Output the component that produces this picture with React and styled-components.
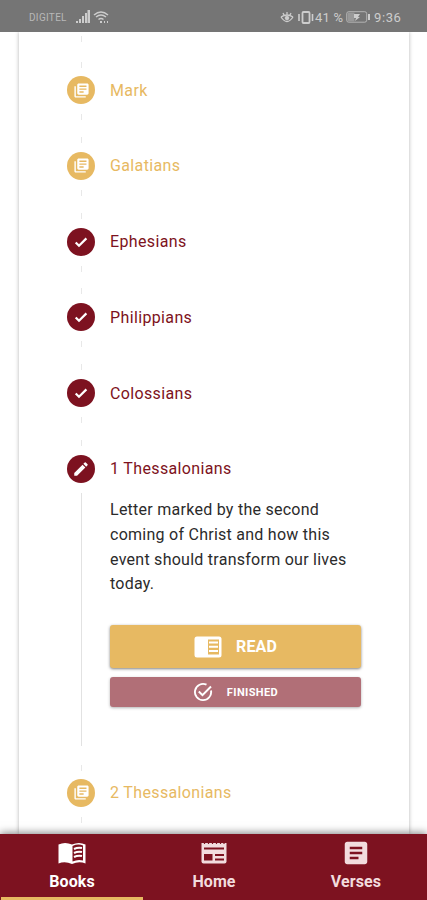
import React from "react"
import styled, { createGlobalStyle } from "styled-components"
import { MdArticle, MdEdit, MdLibraryBooks } from "react-icons/md"

const maroon = "#7d1220"
const gold = "#e7b962"

const GlobalStyle = createGlobalStyle`
    * {
        box-sizing: border-box;
    }

    body {
        margin: 0;
        background: #fff;
        font-family: Roboto, sans-serif;
    }
`

const Screen = styled.div`
    height: 900px;
    display: flex;
    flex-direction: column;
    overflow: hidden;
`

const StatusBar = styled.header`
    height: 32px;
    flex: none;
    padding: 2px 25px 0 29px;
    display: flex;
    align-items: center;
    background: #757575;
    color: #cdcdcd;
`

const Carrier = styled.span`
    width: 47px;
    font-size: 10px;
    letter-spacing: 0.3px;
    color: #b8b8b8;
`

const StatusIcon = styled.svg`
    flex: none;
    margin-right: ${props => props.$gap || 0}px;
    display: block;
`

const Spacer = styled.div`
    flex: 1;
`

const StatusText = styled.span`
    width: ${props => props.$width}px;
    font-size: 13px;
    letter-spacing: ${props => props.$spacing || 0.2}px;
    white-space: nowrap;
`

const Content = styled.main`
    flex: 1;
    min-height: 0;
    overflow: hidden;
    padding: 0 18px 0 19px;
`

const Card = styled.section`
    height: 100%;
    padding: 0 48px;
    box-shadow: 0 0 4px rgba(0, 0, 0, 0.3);
`

const Step = styled.div`
    height: 28px;
    display: flex;
    align-items: center;
    gap: 15px;
`

const Bullet = styled.div`
    width: 28px;
    height: 28px;
    border-radius: 50%;
    display: flex;
    align-items: center;
    justify-content: center;
    background: ${props => props.$color};
    color: #fff;
`

const StepLabel = styled.span`
    font-size: 16px;
    letter-spacing: 0.36px;
    color: ${props => props.$color};
`

const Connector = styled.div`
    height: ${props => props.$height || 47.8}px;
    margin-left: 14px;
    padding: ${props => props.$pad || "10px 0 9px"};
    display: flex;
    flex-direction: column;
    justify-content: space-between;

    &::before,
    &::after {
        content: "";
        width: 1px;
        height: 6px;
        background: #e8e8e8;
    }

    &::before {
        visibility: ${props => (props.$single ? "hidden" : "visible")};
    }
`

const StepContent = styled.div`
    height: 253px;
    margin: 10px 0 0 14px;
    padding: 5px 0 0 28px;
    border-left: 1px solid #e2e2e2;
`

const Description = styled.p`
    margin: 0 0 28px;
    font-size: 16px;
    line-height: 24.8px;
    letter-spacing: 0.26px;
    color: #2b2b2b;
    white-space: nowrap;
`

const Button = styled.button`
    width: 251px;
    height: ${props => (props.$small ? 30 : 43)}px;
    margin: 0 0 9px;
    padding: 0;
    border: 0;
    border-radius: 3px;
    display: flex;
    align-items: center;
    justify-content: center;
    gap: 14px;
    background: ${props => (props.$small ? "#b16f77" : gold)};
    box-shadow: 0 1px 3px rgba(0, 0, 0, ${props => (props.$small ? 0.3 : 0.5)});
    color: #fff;
    font-family: inherit;
    font-size: ${props => (props.$small ? 11 : 16)}px;
    font-weight: 700;
    letter-spacing: ${props => (props.$small ? 0.4 : 0.1)}px;
`

const TabBar = styled.nav`
    position: relative;
    height: 66px;
    flex: none;
    padding-left: 1px;
    display: flex;
    background: ${maroon};
    box-shadow: 0 -1px 8px rgba(0, 0, 0, 0.5);
`

const Tab = styled.a`
    flex: 1;
    padding-top: 4px;
    display: flex;
    flex-direction: column;
    align-items: center;
    border-bottom: 3px solid ${props => (props.$active ? gold : "transparent")};
    color: ${props => (props.$active ? "#fff" : "#f2dcde")};

    svg {
        display: block;
    }
`

const TabLabel = styled.span`
    margin-top: 4px;
    font-size: 16px;
    line-height: 19px;
    font-weight: 700;
    letter-spacing: 0.1px;
`

const CheckIcon = () => (
    <svg width="16" height="16" viewBox="0 0 16 16" fill="none" stroke="currentColor">
        <path d="M2.700 8.500l3.300 3.300 7.400-7.400" strokeWidth="2.200" />
    </svg>
)

const FinishedIcon = () => (
    <svg width="20" height="20" viewBox="0 0 20 20" fill="none" stroke="currentColor">
        <path d="M18 8.500A8.100 8.100 0 1 1 13.500 2.700" strokeWidth="1.900" />
        <path d="M5.800 9.500l3.700 3.700L18 4.500" strokeWidth="2" />
    </svg>
)

const ReaderIcon = () => (
    <svg width="28" height="22" viewBox="0 0 28 22">
        <rect x="0.5" y="0.5" width="27" height="21" rx="2.5" fill="#fff" />
        <path d="M14 3.500h11v15H14z" fill={gold} />
        <path d="M15 6.500h9M15 10.800h9M15 15h9" stroke="#fff" strokeWidth="2" />
    </svg>
)

const BooksIcon = () => (
    <svg width="30" height="30" viewBox="0 0 30 30">
        <path
            d="M1.500 6.500Q8 3.500 15 6.500Q22 3.500 28.500 6.500V25.500Q22 23 15 26Q8 23 1.500 25.500z"
            fill="currentColor"
        />
        <path d="M15.500 8Q21 5.500 26 7.500V22.500Q21 21 15.500 23.500z" fill={maroon} />
        <path
            d="M17 11q4-2 8-1M17 15q4-2 8-1M17 19q4-2 8-1"
            fill="none"
            stroke="currentColor"
            strokeWidth="2"
        />
    </svg>
)

const HomeIcon = () => (
    <svg width="30" height="30" viewBox="0 0 30 30">
        <path
            d="M2.500 5H27.500V23.500q0 2-2 2H4.500q-2 0-2-2z"
            fill="currentColor"
        />
        <path
            d="M5.500 4.500v1.500M9.500 4.500v1.500M13.500 4.500v1.500M17.500 4.500v1.500M21.500 4.500v1.500M25 4.500v1.500"
            stroke={maroon}
            strokeWidth="1.200"
        />
        <path
            d="M5 9.500h20v2H5zM5 16h8.500v6.500H5zM16 16h9v2h-9zM16 20.500h9v2h-9z"
            fill={maroon}
        />
    </svg>
)

const icons = {
    pending: <MdLibraryBooks size={17} />,
    done: <CheckIcon />,
    current: <MdEdit size={18} />,
}

const books = [
    { name: "Mark", status: "pending" },
    { name: "Galatians", status: "pending" },
    { name: "Ephesians", status: "done" },
    { name: "Philippians", status: "done" },
    { name: "Colossians", status: "done" },
    { name: "1 Thessalonians", status: "current" },
]

const BookStep = ({ book }) => {
    const color = book.status === "pending" ? gold : maroon
    return (
        <Step>
            <Bullet $color={color}>{icons[book.status]}</Bullet>
            <StepLabel $color={color}>{book.name}</StepLabel>
        </Step>
    )
}

const App = () => (
    <Screen>
        <GlobalStyle />
        <StatusBar>
            <Carrier>DIGITEL</Carrier>
            <StatusIcon width="15" height="14" viewBox="0 0 15 14" $gap={2} fill="currentColor">
                <path d="M0 11h2v2H0zM3 9h2v4H3zM6 6h2v7H6zM9 3h2v10H9zM11.500 0h2.500v13h-2.500z" />
            </StatusIcon>
            <StatusIcon width="16" height="13" viewBox="0 0 16 13" fill="none" stroke="currentColor">
                <path d="M1 4q7-6 14 0M3 6q5-4 10 0M5.500 8.500q2.500-2 5 0" strokeWidth="1.500" />
                <path d="M7 11h2M11 11h1M14 11h1" strokeWidth="2" />
            </StatusIcon>
            <Spacer />
            <StatusIcon width="14" height="13" viewBox="0 0 14 13" $gap={4} fill="none" stroke="currentColor">
                <path d="M1 6q6 9 12 0M1 6q6-4 12 0M7 1v3M3 2l1 2M11 2l-1 2" strokeWidth="1.300" />
                <circle cx="7" cy="7" r="1.800" fill="currentColor" />
            </StatusIcon>
            <StatusIcon width="16" height="13" viewBox="0 0 16 13" $gap={1} fill="none" stroke="currentColor">
                <rect x="4.500" y="1" width="7" height="11" rx="1" strokeWidth="1.800" />
                <path d="M1 3v7M14.500 3v7" strokeWidth="1.600" />
            </StatusIcon>
            <StatusText $width={31}>41 %</StatusText>
            <StatusIcon width="25" height="12" viewBox="0 0 25 12" $gap={3} fill="none" stroke="currentColor">
                <rect x="0.700" y="0.700" width="20" height="10.500" rx="2" opacity="0.7" />
                <path d="M1.500 1.500h7v9h-7z" fill="#999" stroke="none" />
                <path d="M23 3v6" strokeWidth="2" />
                <path d="M8 3h6l-2 3h2l-5 4 1-3H8z" fill="currentColor" stroke="none" />
            </StatusIcon>
            <StatusText $width={28} $spacing={0.6}>9:36</StatusText>
        </StatusBar>
        <Content>
            <Card>
                <Connector $height={44} $pad="4px 0 8px" />
                {books.map((book, index) => (
                    <React.Fragment key={book.name}>
                        {index > 0 && <Connector />}
                        <BookStep book={book} />
                    </React.Fragment>
                ))}
                <StepContent>
                    <Description>
                        Letter marked by the second
                        <br />
                        coming of Christ and how this
                        <br />
                        event should transform our lives
                        <br />
                        today.
                    </Description>
                    <Button>
                        <ReaderIcon />
                        READ
                    </Button>
                    <Button $small>
                        <FinishedIcon />
                        FINISHED
                    </Button>
                </StepContent>
                <Connector $single $height={33} $pad="0 0 8px" />
                <BookStep book={{ name: "2 Thessalonians", status: "pending" }} />
                <Connector />
            </Card>
        </Content>
        <TabBar>
            <Tab $active>
                <BooksIcon />
                <TabLabel>Books</TabLabel>
            </Tab>
            <Tab>
                <HomeIcon />
                <TabLabel>Home</TabLabel>
            </Tab>
            <Tab>
                <MdArticle size={30} />
                <TabLabel>Verses</TabLabel>
            </Tab>
        </TabBar>
    </Screen>
)

export default App
